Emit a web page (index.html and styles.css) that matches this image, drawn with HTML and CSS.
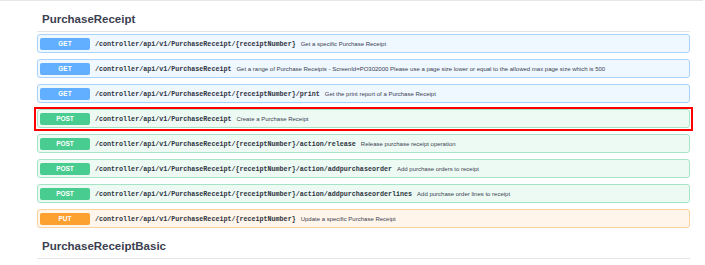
FILE: index.html
```html
<!DOCTYPE html>
<html lang="en">
<head>
  <meta charset="UTF-8" />
  <title>PurchaseReceipt</title>
  <link rel="stylesheet" href="styles.css">
</head>
<body>
  <div class="page">
    <section class="tag">
      <h2 class="tag-title">PurchaseReceipt</h2>
      <div class="ops">
        <div class="op op-get">
          <span class="method">GET</span>
          <span class="path">/controller/api/v1/PurchaseReceipt/{receiptNumber}</span>
          <span class="summary">Get a specific Purchase Receipt</span>
        </div>
        <div class="op op-get">
          <span class="method">GET</span>
          <span class="path">/controller/api/v1/PurchaseReceipt</span>
          <span class="summary">Get a range of Purchase Receipts - ScreenId=PO302000 Please use a page size lower or equal to the allowed max page size which is 500</span>
        </div>
        <div class="op op-get">
          <span class="method">GET</span>
          <span class="path">/controller/api/v1/PurchaseReceipt/{receiptNumber}/print</span>
          <span class="summary">Get the print report of a Purchase Receipt</span>
        </div>
        <div class="op op-post selected">
          <span class="method">POST</span>
          <span class="path">/controller/api/v1/PurchaseReceipt</span>
          <span class="summary">Create a Purchase Receipt</span>
        </div>
        <div class="op op-post">
          <span class="method">POST</span>
          <span class="path">/controller/api/v1/PurchaseReceipt/{receiptNumber}/action/release</span>
          <span class="summary">Release purchase receipt operation</span>
        </div>
        <div class="op op-post">
          <span class="method">POST</span>
          <span class="path">/controller/api/v1/PurchaseReceipt/{receiptNumber}/action/addpurchaseorder</span>
          <span class="summary">Add purchase orders to receipt</span>
        </div>
        <div class="op op-post">
          <span class="method">POST</span>
          <span class="path">/controller/api/v1/PurchaseReceipt/{receiptNumber}/action/addpurchaseorderlines</span>
          <span class="summary">Add purchase order lines to receipt</span>
        </div>
        <div class="op op-put">
          <span class="method">PUT</span>
          <span class="path">/controller/api/v1/PurchaseReceipt/{receiptNumber}</span>
          <span class="summary">Update a specific Purchase Receipt</span>
        </div>
      </div>
    </section>

    <section class="tag">
      <h2 class="tag-title">PurchaseReceiptBasic</h2>
    </section>
  </div>
</body>
</html>
```

FILE: styles.css
```css
body {
  margin: 0;
  background: #fff;
  font-family: "Liberation Sans", Arial, sans-serif;
  color: #3b4151;
}
.page {
  border-top: 1px solid #e6e6e6;
  width: 703px;
  padding-left: 37px;
  box-sizing: border-box;
}
.tag {
  width: 653px;
}
.tag-title {
  margin: 0;
  padding: 11px 5px 5px;
  font-size: 11.5px;
  line-height: 14px;
  font-weight: bold;
  color: #3b4151;
  border-bottom: 1px solid #e4e4e4;
}
.ops {
  display: flex;
  flex-direction: column;
  gap: 6px;
  padding-top: 2px;
}
.op {
  position: relative;
  display: flex;
  align-items: center;
  height: 19px;
  box-sizing: border-box;
  border: 1px solid;
  border-radius: 3px;
  padding: 0 2px;
}
.method {
  width: 50px;
  height: 12px;
  line-height: 12px;
  border-radius: 2px;
  color: #fff;
  font-size: 6.5px;
  font-weight: bold;
  text-align: center;
  flex-shrink: 0;
}
.path {
  margin-left: 5px;
  font-family: "Liberation Mono", "Courier New", monospace;
  font-weight: bold;
  font-size: 6.7px;
  color: #2f3441;
  white-space: nowrap;
}
.summary {
  margin-left: 5px;
  font-size: 6px;
  color: #3b4151;
  white-space: nowrap;
}
.op-get {
  background: #eff7ff;
  border-color: #a9d2fc;
}
.op-get .method {
  background: #61affe;
}
.op-post {
  background: #edfaf4;
  border-color: #a6e4c7;
}
.op-post .method {
  background: #49cc90;
}
.op-put {
  background: #fff5ea;
  border-color: #fcd29d;
}
.op-put .method {
  background: #fca130;
}
/* annotation box around the highlighted row */
.selected::after {
  content: "";
  position: absolute;
  top: -3px;
  bottom: -4px;
  left: -4px;
  right: -4px;
  border: 2px solid #f00;
}
```
